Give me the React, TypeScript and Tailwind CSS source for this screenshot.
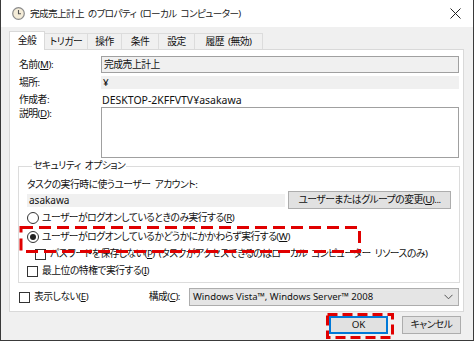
import React from "react";

const F = "font-[family-name:'Noto_Sans','Noto_Sans_CJK_JP',sans-serif] [font-feature-settings:'palt']";

function Checkbox() {
  return <span className="inline-block w-[11px] h-[11px] border border-[#333] bg-white shrink-0" />;
}

function Radio({ checked }: { checked?: boolean }) {
  return (
    <span className="w-[12px] h-[12px] rounded-full border border-[#333] bg-white shrink-0 flex items-center justify-center">
      {checked && <span className="w-[6px] h-[6px] rounded-full bg-[#222]" />}
    </span>
  );
}

function U({ c }: { c: string }) {
  return <span className="underline">{c}</span>;
}

export default function App() {
  const tabs: { t: string; w: string }[] = [
    { t: "トリガー", w: "w-[43px]" },
    { t: "操作", w: "w-[34px]" },
    { t: "条件", w: "w-[37px]" },
    { t: "設定", w: "w-[36px]" },
    { t: "履歴 (無効)", w: "w-[68px]" },
  ];
  return (
    <div className={`w-[474px] h-[341px] bg-[#f0f0f0] border-x border-b border-[#3a3a3a] relative overflow-hidden text-[#111] text-[9.8px] tracking-[-0.5px] [word-spacing:2px] leading-[14px] whitespace-nowrap ${F}`}>
      {/* Title bar */}
      <div className="h-[27px] bg-white flex items-center pl-[11px] pr-[12px]">
        <svg width="13" height="13" viewBox="0 0 13 13" className="shrink-0">
          <circle cx="6.5" cy="6.5" r="5.8" fill="#f4ecd8" stroke="#8a8a8a" strokeWidth="1.2" />
          <path d="M6.5 3 V6.8 H9" fill="none" stroke="#555" strokeWidth="1.1" />
        </svg>
        <span className="ml-[5px] text-[9.6px] tracking-[-0.6px] text-[#222]">完成売上計上 のプロパティ (ローカル コンピューター)</span>
        <span className="ml-auto">
          <svg width="11" height="11" viewBox="0 0 11 11">
            <path d="M0.5 0.5 L10.5 10.5 M10.5 0.5 L0.5 10.5" stroke="#222" strokeWidth="1" />
          </svg>
        </span>
      </div>

      {/* Tabs */}
      <div className="pl-[8px] pt-[4px] flex items-end h-[22px]">
        <div className="w-[36px] h-[19px] bg-white border-x border-t border-[#d9d9d9] flex items-center justify-center relative top-[1px] z-10">
          全般
        </div>
        {tabs.map((t) => (
          <div key={t.t} className={`${t.w} h-[16px] flex items-center justify-center border-t border-r border-[#dcdcdc] bg-[#f0f0f0]`}>
            {t.t}
          </div>
        ))}
      </div>

      {/* Panel */}
      <div className="ml-[8px] w-[455px] h-[263px] bg-white border border-[#d9d9d9] pt-[6px] pl-[9px] pr-[4px] flex flex-col">
        <div className="flex items-center h-[17px]">
          <div className="w-[82px]">名前(<U c="M" />):</div>
          <div className="flex-1 h-[17px] border border-[#a0a0a0] bg-[#f0f0f0] pl-[2px] flex items-center">完成売上計上</div>
        </div>
        <div className="flex items-center h-[13px] mt-[3px]">
          <div className="w-[82px]">場所:</div>
          <div className="flex-1 h-[13px] bg-[#f0f0f0] pl-[2px] flex items-center">¥</div>
        </div>
        <div className="flex items-center h-[14px] mt-[4px]">
          <div className="w-[82px]">作成者:</div>
          <div className="flex-1 pl-[1px] text-[10.5px] tracking-normal">DESKTOP-2KFFVTV¥asakawa</div>
        </div>
        <div className="flex items-start">
          <div className="w-[82px]">説明(<U c="D" />):</div>
          <div className="flex-1 h-[51px] border border-[#a0a0a0] bg-white" />
        </div>

        <fieldset className="mt-[1px] ml-[-1px] mr-[1px] border border-[#dcdcdc] pl-[8px] pr-[8px] pb-[4px] pt-[5px] flex flex-col">
          <legend className="px-[1px] ml-[5px] leading-[14px]">セキュリティ オプション</legend>
          <div className="h-[13px] leading-[13px]">タスクの実行時に使うユーザー アカウント:</div>
          <div className="flex items-center h-[18px]">
            <div className="w-[258px] h-[13px] bg-[#f0f0f0] pl-[2px] flex items-center text-[10px] tracking-normal">asakawa</div>
            <div className="ml-[3px] w-[163px] h-[18px] bg-[#e1e1e1] border border-[#adadad] flex items-center justify-center">
              ユーザーまたはグループの変更(<U c="U" />)...
            </div>
          </div>
          <div className="flex items-center h-[14px] mt-[2px]">
            <Radio />
            <span className="ml-[3px]">ユーザーがログオンしているときのみ実行する(<U c="R" />)</span>
          </div>
          <div className="flex items-center h-[14px] mt-[5px]">
            <Radio checked />
            <span className="ml-[3px]">ユーザーがログオンしているかどうかにかかわらず実行する(<U c="W" />)</span>
          </div>
          <div className="flex items-center h-[14px] mt-[3px] pl-[8px]">
            <Checkbox />
            <span className="ml-[4px]">パスワードを保存しない(<U c="P" />) (タスクがアクセスできるのはローカル コンピューター リソースのみ)</span>
          </div>
          <div className="flex items-center h-[14px] mt-[3px]">
            <Checkbox />
            <span className="ml-[4px]">最上位の特権で実行する(<U c="I" />)</span>
          </div>
        </fieldset>

        <div className="flex items-center h-[18px] mt-[5px]">
          <Checkbox />
          <span className="ml-[4px]">表示しない(<U c="E" />)</span>
          <span className="ml-auto mr-[9px]">構成(<U c="C" />):</span>
          <div className="w-[270px] h-[18px] bg-[#e5e5e5] border border-[#adadad] flex items-center pl-[3px] pr-[5px]">
            <span className="text-[9.5px] tracking-normal [word-spacing:normal]">Windows Vista™, Windows Server™ 2008</span>
            <svg width="9" height="6" viewBox="0 0 9 6" className="ml-auto">
              <path d="M0.5 0.8 L4.5 4.8 L8.5 0.8" fill="none" stroke="#555" strokeWidth="1" />
            </svg>
          </div>
        </div>
      </div>

      {/* Buttons */}
      <div className="flex justify-end pr-[12px] mt-[4px] gap-[14px]">
        <div className="w-[59px] h-[18px] bg-[#e1e1e1] border-2 border-[#0078d7] flex items-center justify-center tracking-normal">OK</div>
        <div className="w-[59px] h-[18px] bg-[#e1e1e1] border border-[#adadad] flex items-center justify-center">キャンセル</div>
      </div>

      {/* Annotation overlays */}
      <svg className="absolute left-0 top-0 pointer-events-none" width="474" height="341">
        <rect x="20" y="227.5" width="338.5" height="24" fill="none" stroke="#e00000" strokeWidth="3" strokeDasharray="12 6" />
        <rect x="326.5" y="314.5" width="65" height="23" fill="none" stroke="#e00000" strokeWidth="3" strokeDasharray="10 5" />
      </svg>
    </div>
  );
}
